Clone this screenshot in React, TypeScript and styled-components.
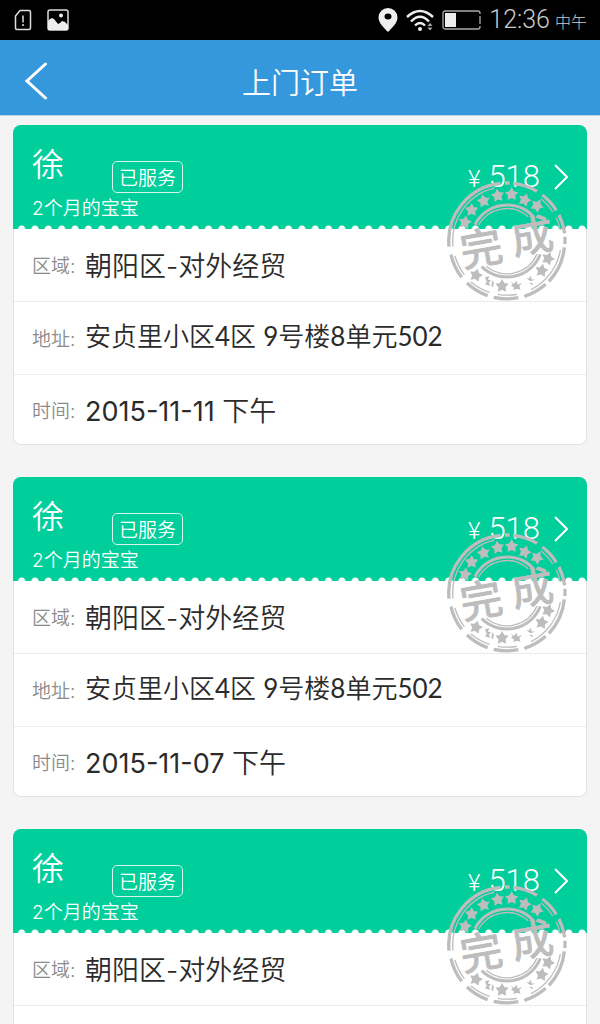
import React from "react";
import styled, { createGlobalStyle } from "styled-components";

const cjk = '"Noto Sans CJK SC", sans-serif';
const mixed = `Inter, ${cjk}`;
const roboto = `Roboto, ${cjk}`;
const lato = `Lato, ${cjk}`;

const GlobalStyle = createGlobalStyle`
  *, *::before, *::after { box-sizing: border-box; }
  body {
    margin: 0;
    background: #f4f4f4;
    color: #2b2b2b;
    font-family: ${mixed};
    font-weight: 350;
  }
  html { scrollbar-width: none; }
`;

const StatusBar = styled.div`
  display: flex;
  align-items: center;
  justify-content: space-between;
  height: 40px;
  padding: 0 13px;
  background: #000;
  color: #ccc;
`;

const StatusGroup = styled.div<{ $gap: number }>`
  display: flex;
  align-items: center;
  gap: ${(p) => p.$gap}px;
`;

const Clock = styled.time`
  display: flex;
  align-items: baseline;
  gap: 5px;
  font: 300 25px/40px ${roboto};
`;

const Period = styled.span`
  font: 300 16px/24px ${cjk};
`;

const NavBar = styled.header`
  display: grid;
  grid-template-columns: 72px 1fr 72px;
  align-items: center;
  height: 76px;
  padding-top: 6px;
  background: #3598dc;
  border-bottom: 1px solid #bcd3e6;
  color: #fff;
`;

const BackButton = styled.button`
  display: flex;
  align-items: center;
  height: 64px;
  padding: 0 24px;
  border: 0;
  background: none;
  color: inherit;
`;

const Title = styled.h1`
  margin: 0;
  text-align: center;
  font-family: ${cjk};
  font-size: 29px;
  line-height: 40px;
  font-weight: inherit;
`;

const OrderList = styled.main`
  display: flex;
  flex-direction: column;
  gap: 32px;
  padding: 9px 13px 32px;
`;

const Card = styled.article`
  position: relative;
  overflow: hidden;
  border-radius: 8px;
  background: #fff;
  box-shadow: inset 0 0 0 1px #e2e2e2;
`;

const CardHead = styled.a`
  display: flex;
  justify-content: space-between;
  height: 104px;
  padding: 20px 19px 0;
  background:
    radial-gradient(circle at 50% 100%, #fff 3px, transparent 4px) 2px 100% / calc(100% / 43) 4px repeat-x,
    #00ce9b;
  color: #fff;
  text-decoration: none;
`;

const Customer = styled.div`
  display: grid;
  grid-template-columns: 80px auto;
  grid-template-rows: 48px 24px;
  justify-content: start;
`;

const Name = styled.h2`
  margin: 0;
  font-size: 32px;
  line-height: 40px;
  font-weight: inherit;
`;

const StatusTag = styled.span`
  align-self: end;
  height: 32px;
  padding: 0 6px;
  border: 1px solid #d5f7ee;
  border-radius: 5px;
  font-family: ${cjk};
  font-size: 19px;
  line-height: 30px;
`;

const BabyAge = styled.p`
  grid-column: 1 / -1;
  margin: 0;
  font-size: 19px;
  line-height: 32px;
`;

const Price = styled.div`
  display: flex;
  align-items: center;
  gap: 14px;
  height: 64px;
`;

const Amount = styled.span`
  font: 300 31px/32px ${roboto};
`;

const Currency = styled.small`
  margin-right: 8px;
  font: 300 24px/24px ${roboto};
`;

const Details = styled.dl`
  margin: 0;
`;

const DetailRow = styled.div`
  display: flex;
  align-items: center;
  gap: 9px;
  height: 73px;
  margin: 0 1px;
  padding: 4px 0 0 18px;
  border-bottom: 1px solid #ececec;

  &:last-child {
    height: 70px;
    border-bottom-color: transparent;
  }
`;

const Label = styled.dt`
  width: 44px;
  flex: none;
  color: #8a8a8a;
  font-size: 19px;
  line-height: 28px;
  white-space: nowrap;
`;

const Value = styled.dd<{ $kind: FieldKind }>`
  margin: 0;
  padding-bottom: ${(p) => (p.$kind === "address" ? 8 : 0)}px;
  font-family: ${(p) => (p.$kind === "address" ? lato : mixed)};
  font-size: ${(p) => (p.$kind === "address" ? 26 : 27)}px;
  line-height: 40px;
`;

const Latin = styled.span`
  font-weight: 400;
`;

const StampMark = styled.svg`
  position: absolute;
  top: 56px;
  right: 20px;
  width: 120px;
  height: 120px;
  pointer-events: none;
`;

type FieldKind = "area" | "address" | "time";

const starPoints = (cx: number, cy: number, r: number, turn: number) =>
  Array.from({ length: 10 }, (_, i) => {
    const a = ((i * 36 + turn - 90) * Math.PI) / 180;
    const d = i % 2 ? r * 0.54 : r;
    return `${(cx + d * Math.cos(a)).toFixed(1)},${(cy + d * Math.sin(a)).toFixed(1)}`;
  }).join(" ");

const stars: [number, number, number][] = [
  [102, 217, 10], [122, 180, 0], [158, 153, -12], [200, 137, -8], [242, 133, 0],
  [281, 150, 20], [318, 167, 30], [135, 376, 15], [213, 408, 0], [332, 362, 10], [351, 326, 20],
];

const Stamp = () => (
  <StampMark viewBox="48 93 360 360" role="img" aria-label="完成">
    <g fill="none" stroke="#bdbdbd">
      <path d="M401 250A174 174 0 0 0 384 195M376 181A174 174 0 0 0 334 135M318 124A174 174 0 0 0 246 100M236 99h-14M208 100A174 174 0 0 0 54 290M60 314A174 174 0 0 0 92 382M108 399A174 174 0 0 0 170 437M188 442A174 174 0 0 0 262 443M280 439A174 174 0 0 0 344 403M354 394A174 174 0 0 0 400 292M402 282v-22" strokeWidth="10" />
      <path d="M388 240A163 163 0 0 0 376 204M366 186A163 163 0 0 0 330 146M190 114A163 163 0 0 0 66 290M72 318A163 163 0 0 0 100 374M120 396A163 163 0 0 0 176 427M200 433A163 163 0 0 0 258 433M300 419A163 163 0 0 0 388 300" strokeWidth="4" />
      <path d="M132 224A108 108 0 0 1 304 196M152 350A108 108 0 0 0 328 313" strokeWidth="9" />
      <path d="M142 226A98 98 0 0 1 292 200M166 349A98 98 0 0 0 318 312" strokeWidth="4" />
    </g>
    <g fill="#bdbdbd">
      {stars.map(([x, y, turn]) => (
        <polygon key={`${x}-${y}`} points={starPoints(x, y, 21, turn)} />
      ))}
      <path d="M162 382l13-4-4 12 10-1-7 9 3 10-15-5 5-8zM184 391l5 7-3 14-5-4zM240 395l9 6 8-9 3 12 13-6-8 11 4 10-12-3-9 5 1-10-10-3 6-4zM283 382l9 4 8-9 1 11 11 1-14 5zM294 400l10-2 2 8z" />
    </g>
    <g fill="#bdbdbd" stroke="#bdbdbd" strokeWidth="3" strokeLinejoin="round" fontFamily='"Noto Sans CJK SC", sans-serif' fontWeight="400" fontSize="126" textAnchor="middle">
      <text transform="translate(159 341) rotate(-10)">完</text>
      <text transform="translate(311 303) rotate(-10)">成</text>
    </g>
  </StampMark>
);

const orders = [
  { id: 1, address: "安贞里小区4区 9号楼8单元502", date: "2015-11-11", period: "下午" },
  { id: 2, address: "安贞里小区4区 9号楼8单元502", date: "2015-11-07", period: "下午" },
  { id: 3, address: "安贞里小区4区 9号楼8单元502", date: "2015-11-07", period: "下午" },
];

const Field = ({ label, kind, children }: { label: string; kind: FieldKind; children: React.ReactNode }) => (
  <DetailRow>
    <Label>{label}:</Label>
    <Value $kind={kind}>{children}</Value>
  </DetailRow>
);

const withLatin = (text: string) =>
  text.split(/(\d+)/).map((part, i) => (i % 2 ? <Latin key={i}>{part}</Latin> : part));

const OrderCard = ({ address, date, period }: { address: string; date: string; period: string }) => (
  <Card>
    <CardHead href="#order">
      <Customer>
        <Name>徐</Name>
        <StatusTag>已服务</StatusTag>
        <BabyAge>2个月的宝宝</BabyAge>
      </Customer>
      <Price>
        <Amount><Currency>¥</Currency>518</Amount>
        <svg width="14" height="26" viewBox="0 0 14 26" fill="none" stroke="#fff" strokeWidth="2" aria-hidden="true">
          <path d="M1 1l12 12L1 25" />
        </svg>
      </Price>
    </CardHead>
    <Details>
      <Field label="区域" kind="area">朝阳区-对外经贸</Field>
      <Field label="地址" kind="address">{withLatin(address)}</Field>
      <Field label="时间" kind="time"><Latin>{date}</Latin> {period}</Field>
    </Details>
    <Stamp />
  </Card>
);

export default function App() {
  return (
    <>
      <GlobalStyle />
      <StatusBar>
        <StatusGroup $gap={14}>
          <svg width="20" height="22" viewBox="0 0 20 22" fill="none" stroke="#ddd" strokeWidth="1.5" aria-hidden="true">
            <path d="M7 1.5h9a1.500 1.500 0 0 1 1.500 1.500v16a1.500 1.500 0 0 1-1.500 1.500H4a1.500 1.500 0 0 1-1.500-1.500V7z" />
            <path d="M10 6.500v7M10 15v2" />
          </svg>
          <svg width="22" height="22" viewBox="0 0 22 22" aria-hidden="true">
            <rect x="1" y="1" width="20" height="20" rx="2" fill="none" stroke="#ddd" strokeWidth="1.500" />
            <path d="M1 12l2-2 2-1 2 1 4 5 2-1 2-2 3 1 3 3v5H1z" fill="#eee" />
            <circle cx="14" cy="6.500" r="2" fill="#eee" />
          </svg>
        </StatusGroup>
        <StatusGroup $gap={8}>
          <svg width="20" height="24" viewBox="0 0 20 24" aria-hidden="true">
            <path fill="#eee" fillRule="evenodd" d="M10 0a9.500 9.500 0 0 1 9.500 9.500C19.500 15 14 20 10 24 6 20 .5 15 .5 9.500A9.500 9.500 0 0 1 10 0zm0 5.500a3.500 3 0 1 0 0 6 3.500 3 0 0 0 0-6z" />
          </svg>
          <svg width="28" height="22" viewBox="0 0 28 22" fill="none" stroke="#eee" strokeWidth="2.400" aria-hidden="true">
            <path d="M1 8Q14-4 27 8M5 12.500Q14 3 23 12.500M9 16.500q5-5 10 0" />
            <circle cx="14" cy="20" r="2" fill="#eee" stroke="none" />
            <path d="M24 14l2.500 3h-5zM24 21.500l-2.500-3h5z" fill="#aaa" stroke="none" />
          </svg>
          <svg width="39" height="20" viewBox="0 0 39 20" aria-hidden="true">
            <rect x="1" y="1" width="37" height="18" rx="2" fill="none" stroke="#aaa" strokeWidth="1.300" />
            <rect x="3" y="3" width="11" height="14" fill="#eee" />
            <path d="M38 4v2M38 14v2" stroke="#000" strokeWidth="2" />
          </svg>
          <Clock>12:36<Period>中午</Period></Clock>
        </StatusGroup>
      </StatusBar>
      <NavBar>
        <BackButton type="button" aria-label="返回">
          <svg width="24" height="38" viewBox="0 0 24 38" fill="none" stroke="#fff" strokeWidth="3" strokeLinecap="round" aria-hidden="true">
            <path d="M21.500 2L3 19l18.500 17" />
          </svg>
        </BackButton>
        <Title>上门订单</Title>
      </NavBar>
      <OrderList>
        {orders.map((o) => (
          <OrderCard key={o.id} address={o.address} date={o.date} period={o.period} />
        ))}
      </OrderList>
    </>
  );
}
